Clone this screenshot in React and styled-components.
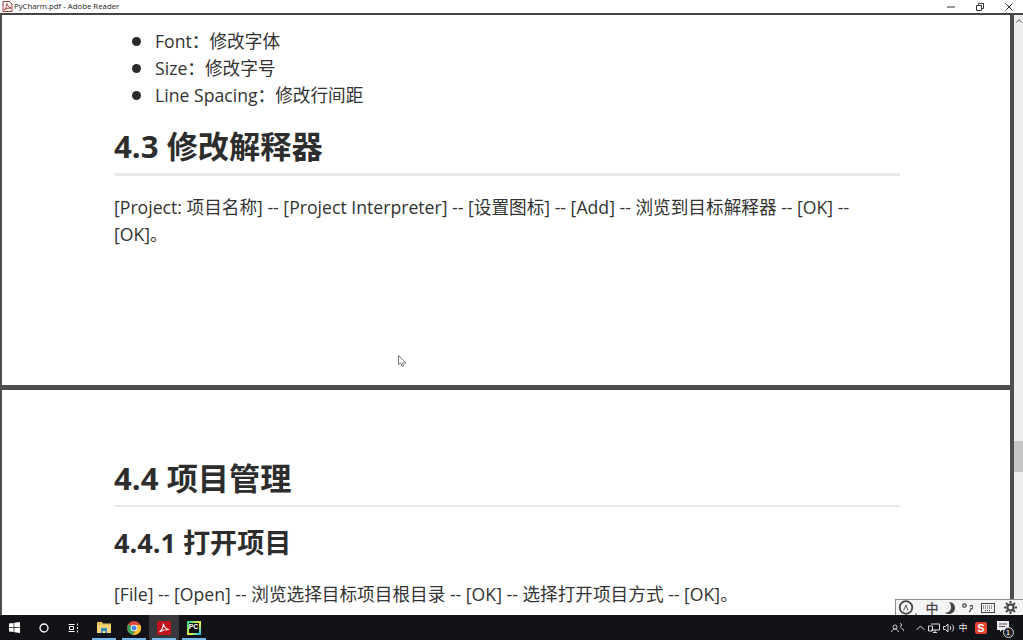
import React from "react";
import styled, { createGlobalStyle } from "styled-components";

const Global = createGlobalStyle`
  html, body {
    margin: 0;
    padding: 0;
    background: #fff;
    overflow: hidden;
  }
`;

const BODY_FONT = `"Open Sans", "Noto Sans CJK SC", sans-serif`;

const Screen = styled.div`
  position: relative;
  width: 1023px;
  height: 640px;
  display: flex;
  flex-direction: column;
  overflow: hidden;
  font-family: ${BODY_FONT};
`;

const TitleBar = styled.header`
  height: 13px;
  flex: none;
  display: flex;
  align-items: center;
  padding-left: 2px;
  gap: 1px;
  background: #fff;
  border-bottom: 2px solid #454545;
`;

const TitleText = styled.span`
  font-size: 7.8px;
  line-height: 13px;
  color: #222;
  flex: 1;
`;

const WinButtons = styled.div`
  display: flex;
  align-items: center;
`;

const WinButton = styled.div`
  width: 29px;
  height: 13px;
  display: flex;
  align-items: center;
  justify-content: center;
`;

const Main = styled.div`
  flex: 1;
  min-height: 0;
  display: flex;
`;

const Viewer = styled.div`
  width: 1014px;
  flex: none;
  background: #4d4d4d;
  border-left: 2px solid #4d4d4d;
  border-right: 4px solid #4d4d4d;
  box-sizing: border-box;
  display: flex;
  flex-direction: column;
  gap: 5px;
  overflow: hidden;
`;

const Page = styled.section`
  flex: none;
  height: ${(p) => p.$height}px;
  background: #fff;
  padding: ${(p) => p.$top}px 110px 0 112px;
  box-sizing: border-box;
  color: #333;
`;

const BulletList = styled.ul`
  margin: 0 0 16px;
  padding: 0 0 0 41px;
  font-size: 17.65px;
  line-height: 27px;
  list-style: none;
`;

const Bullet = styled.li`
  position: relative;
  &::before {
    content: "";
    position: absolute;
    left: -23px;
    top: 9px;
    width: 9px;
    height: 9px;
    border-radius: 50%;
    background: #2b2b2b;
  }
`;

const H2 = styled.h2`
  margin: 0 0 ${(p) => p.$after ?? 18}px;
  padding-bottom: ${(p) => p.$pad || 6}px;
  font-size: 31.2px;
  line-height: 42px;
  font-weight: 700;
  color: #2d2d2d;
  border-bottom: ${(p) => p.$rule || 3}px solid #e9e9e9;
`;

const H3 = styled.h3`
  margin: 17px 0 19px;
  font-size: 27.1px;
  line-height: 38px;
  font-weight: 700;
  color: #2d2d2d;
`;

const Para = styled.p`
  margin: 0;
  font-size: 17.65px;
  line-height: 27px;
  color: #333;
`;

const Scrollbar = styled.aside`
  flex: 1;
  position: relative;
  background: #eeeeee;
`;

const ScrollArrow = styled.div`
  display: flex;
  justify-content: center;
  padding-top: 4px;
`;

const ScrollThumb = styled.div`
  position: absolute;
  top: 426px;
  left: 0;
  right: 0;
  height: 31px;
  background: #c6c6c6;
`;

const Taskbar = styled.footer`
  height: 25px;
  flex: none;
  display: flex;
  align-items: center;
  background: #111316;
`;

const TaskSlot = styled.div`
  width: 29.5px;
  height: 25px;
  flex: none;
  display: flex;
  align-items: center;
  justify-content: center;
`;

const AppSlot = styled.div`
  position: relative;
  width: 30px;
  height: 25px;
  flex: none;
  display: flex;
  align-items: center;
  justify-content: center;
  background: ${(p) => (p.$active ? "#37383b" : "transparent")};
  &::after {
    content: "";
    position: absolute;
    left: 3px;
    right: 3px;
    bottom: 0;
    height: 2px;
    background: #76b9ed;
  }
`;

const Tray = styled.div`
  margin-left: auto;
  display: flex;
  align-items: center;
  padding-right: 8px;
  color: #e8e8e8;
`;

const TrayGlyph = styled.span`
  font-size: 9px;
  width: ${(p) => p.$w || 14}px;
  margin-right: ${(p) => p.$gap || 0}px;
  display: flex;
  justify-content: center;
  align-items: center;
`;

const PcBadge = styled.div`
  width: 14px;
  height: 14px;
  background: #0c0c0c;
  border: 2px solid #21d789;
  border-image: linear-gradient(135deg, #21d789, #fcf84a 55%, #07c3f2) 1;
  box-sizing: border-box;
  color: #fff;
  font: 700 7px/8px "Liberation Sans", sans-serif;
  text-align: center;
  overflow: hidden;
`;

const SogouBadge = styled.div`
  width: 12px;
  height: 12px;
  border-radius: 2px;
  background: #e2402a;
  color: #fff;
  font: 700 11px/12px "Liberation Sans", sans-serif;
  text-align: center;
`;

const NoticeWrap = styled.div`
  position: relative;
  width: 16px;
  height: 16px;
`;

const NoticeCount = styled.span`
  position: absolute;
  right: -2px;
  bottom: -2px;
  width: 11px;
  height: 11px;
  border-radius: 50%;
  background: #222;
  border: 1px solid #ddd;
  box-sizing: border-box;
  color: #fff;
  font: 8px/9px "Liberation Sans", sans-serif;
  text-align: center;
`;

const ImeBar = styled.div`
  position: absolute;
  left: 895px;
  top: 599px;
  width: 128px;
  height: 16px;
  box-sizing: border-box;
  background: #f4f4f4;
  border: 1px solid #8d8d8d;
  border-right: none;
  border-bottom: none;
  display: flex;
  align-items: center;
  color: #444;
`;

const ImeCell = styled.span`
  width: ${(p) => p.$w || 20}px;
  flex: none;
  display: flex;
  align-items: center;
  justify-content: center;
  font-size: 13px;
  font-weight: 500;
`;

const Pointer = styled.svg`
  position: absolute;
  left: 398px;
  top: 355px;
`;

const PdfIcon = () => (
  <svg width="11" height="11" viewBox="0 0 11 11">
    <path d="M1 .5h6.500L10 3v7.500H1z" fill="#fff" stroke="#9c3a3a" />
    <path d="M2 9c2-1.500 3-4 2.800-6.500C5.500 5 7 6.500 9 7 6.500 7 4 7.500 2 9z" fill="none" stroke="#b3201f" strokeWidth=".9" />
  </svg>
);

const WindowsLogo = () => (
  <svg width="11" height="11" viewBox="0 0 11 11" fill="#fff">
    <path d="M0 1.600 4.600.9v4.200H0zM5.300.8 11 0v5.100H5.300zM0 5.800h4.600v4.300L0 9.400zM5.300 5.800H11V11l-5.700-.8z" />
  </svg>
);

const FolderIcon = () => (
  <svg width="14" height="13" viewBox="0 0 14 13">
    <path d="M0 1h5l1 1.500h8V12H0z" fill="#e9c45c" />
    <path d="M0 4h14v8H0z" fill="#f6d774" />
    <path d="M4 7h6v5H8.500v-2h-3v2H4z" fill="#2c8fc9" />
  </svg>
);

const ChromeIcon = () => (
  <svg width="14" height="14" viewBox="0 0 14 14">
    <circle cx="7" cy="7" r="7" fill="#dd4b3e" />
    <path d="M7 7 1.400 3.200A7 7 0 0 0 6 13.900z" fill="#3aa757" />
    <path d="M7 4h6.400A7 7 0 0 1 6 13.900L8.500 9z" fill="#f6c432" />
    <circle cx="7" cy="7" r="3.300" fill="#fff" />
    <circle cx="7" cy="7" r="2.500" fill="#4a8af4" />
  </svg>
);

const AcrobatIcon = () => (
  <svg width="14" height="14" viewBox="0 0 14 14">
    <rect width="14" height="14" fill="#c0121c" />
    <path d="M2.500 11C5 9 6.500 6 6.300 2.500 7 6 9 8 12 8.500 8.500 8.500 5.500 9 2.500 11z" fill="none" stroke="#fff" strokeWidth="1.100" />
  </svg>
);

const App = () => (
  <>
    <Global />
    <Screen>
      <TitleBar>
        <PdfIcon />
        <TitleText>PyCharm.pdf - Adobe Reader</TitleText>
        <WinButtons>
          <WinButton>
            <svg width="8" height="2"><path d="M0 1h8" stroke="#333" /></svg>
          </WinButton>
          <WinButton>
            <svg width="8" height="8"><path d="M.5 2.500h5v5h-5zM2.500 2.500v-2h5v5h-2" fill="none" stroke="#333" /></svg>
          </WinButton>
          <WinButton>
            <svg width="8" height="8"><path d="m.5.500 7 7m0-7-7 7" stroke="#333" /></svg>
          </WinButton>
        </WinButtons>
      </TitleBar>
      <Main>
        <Viewer>
          <Page $height={370} $top={13}>
            <BulletList>
              <Bullet>Font：修改字体</Bullet>
              <Bullet>Size：修改字号</Bullet>
              <Bullet>Line Spacing：修改行间距</Bullet>
            </BulletList>
            <H2>4.3 修改解释器</H2>
            <Para>
              [Project: 项目名称] -- [Project Interpreter] -- [设置图标] -- [Add] -- 浏览到目标解释器 -- [OK] -- [OK]。
            </Para>
          </Page>
          <Page $height={225} $top={67}>
            <H2 $rule={2} $pad={6} $after={0}>4.4 项目管理</H2>
            <H3>4.4.1 打开项目</H3>
            <Para>[File] -- [Open] -- 浏览选择目标项目根目录 -- [OK] -- 选择打开项目方式 -- [OK]。</Para>
          </Page>
        </Viewer>
        <Scrollbar>
          <ScrollArrow>
            <svg width="6" height="4"><path d="m.5 3.500 2.500-3 2.500 3" fill="none" stroke="#555" /></svg>
          </ScrollArrow>
          <ScrollThumb />
        </Scrollbar>
      </Main>
      <Taskbar>
        <TaskSlot><WindowsLogo /></TaskSlot>
        <TaskSlot>
          <svg width="10" height="10"><circle cx="5" cy="5" r="4" fill="none" stroke="#fff" strokeWidth="1.300" /></svg>
        </TaskSlot>
        <TaskSlot>
          <svg width="11" height="10" fill="none" stroke="#fff"><path d="M.5 1.500h6M.5 8.500h6M1.500 3.500h4v3h-4zM9.500.5v2M9.500 4v2M9.500 7.500v2" /></svg>
        </TaskSlot>
        <AppSlot><FolderIcon /></AppSlot>
        <AppSlot><ChromeIcon /></AppSlot>
        <AppSlot $active><AcrobatIcon /></AppSlot>
        <AppSlot><PcBadge>PC</PcBadge></AppSlot>
        <Tray>
          <TrayGlyph $w={14} $gap={9}>
            <svg width="13" height="11" fill="none" stroke="#ddd" strokeWidth=".9"><circle cx="4" cy="5" r="2" /><path d="M.5 10c.5-2 2-3 3.500-3s3 1 3.500 3M9 1.500a1.500 1.500 0 1 1 0 3M9.500 6c1.500 0 3 1 3 3" /></svg>
          </TrayGlyph>
          <TrayGlyph>
            <svg width="9" height="6" fill="none" stroke="#ddd"><path d="m.5 5 4-4 4 4" /></svg>
          </TrayGlyph>
          <TrayGlyph>
            <svg width="12" height="10" fill="none" stroke="#ddd"><path d="M3 1h8.500v6H3M.5 3h4v5h-4zM7 7v2M5 9.500h4" /></svg>
          </TrayGlyph>
          <TrayGlyph $w={15}>
            <svg width="12" height="10" fill="none" stroke="#ddd"><path d="M.5 3.500h2L5 1v8L2.500 6.500h-2zM7 3c1 1 1 3 0 4M9 1.500c2 2 2 5 0 7" /></svg>
          </TrayGlyph>
          <TrayGlyph>中</TrayGlyph>
          <TrayGlyph $w={22}><SogouBadge>S</SogouBadge></TrayGlyph>
          <TrayGlyph $w={23}>
            <NoticeWrap>
              <svg width="14" height="13" fill="#eee"><path d="M1 1h12v9H6l-2 2v-2H1z" /><path d="M3 4h8M3 6.500h6" stroke="#555" /></svg>
              <NoticeCount>1</NoticeCount>
            </NoticeWrap>
          </TrayGlyph>
        </Tray>
      </Taskbar>
      <ImeBar>
        <ImeCell $w={24}>
          <svg width="20" height="15" fill="none" stroke="#444"><circle cx="8" cy="7.500" r="6.300" strokeWidth="1.800" /><path d="M5.500 10.500 8 5l2 5.500" strokeWidth=".9" /><path d="M17 14h2" /></svg>
        </ImeCell>
        <ImeCell $w={24}>中</ImeCell>
        <ImeCell $w={12}>
          <svg width="10" height="12" viewBox="0 0 10 12" fill="#444"><path d="M4 0c4 0 6 3 6 6 0 3.500-3 6-6 6-1.500 0-3-.5-4-1.500 3.500.5 6-2 6-5C6 3.500 5.500 1.500 4 0z" /></svg>
        </ImeCell>
        <ImeCell $w={22}>
          <svg width="11" height="10" fill="none" stroke="#444" strokeWidth="1.200"><circle cx="2.500" cy="2.500" r="1.700" /><path d="M8 3.500a1.500 1.500 0 1 1 1 2c0 1.500-.5 2.500-2 3.500" /></svg>
        </ImeCell>
        <ImeCell $w={20}>
          <svg width="14" height="10" fill="none" stroke="#444"><rect x=".5" y=".5" width="13" height="9" /><path d="M2 3h10M2 5h10M4 7.500h6" strokeDasharray="1 1" /></svg>
        </ImeCell>
        <ImeCell $w={24}>
          <svg width="13" height="13" viewBox="0 0 13 13" fill="none" stroke="#444"><circle cx="6.500" cy="6.500" r="3" strokeWidth="2" /><path d="M6.500 0v2.500M6.500 10.500V13M0 6.500h2.500M10.500 6.500H13M2 2l1.700 1.700M9.300 9.300 11 11M2 11l1.700-1.700M9.300 3.700 11 2" strokeWidth="2" /></svg>
        </ImeCell>
      </ImeBar>
      <Pointer width="9" height="13" viewBox="0 0 9 13">
        <path d="M.5.500v9l2-1.500 1.500 3.500 1.500-.5L4.500 8H8z" fill="#fff" stroke="#555" strokeWidth=".8" />
      </Pointer>
    </Screen>
  </>
);

export default App;
